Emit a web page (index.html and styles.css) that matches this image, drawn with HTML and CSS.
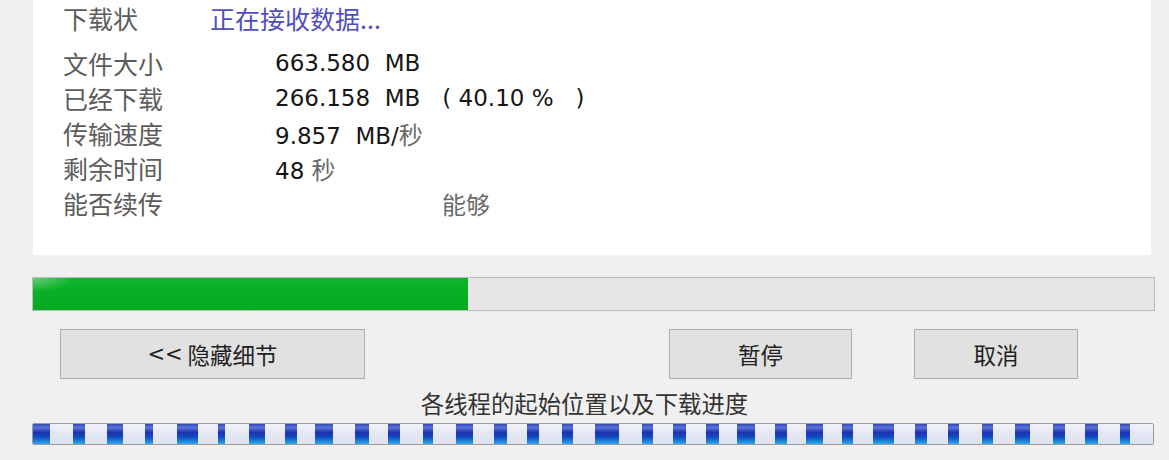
FILE: index.html
```html
<!DOCTYPE html>
<html lang="zh-CN">
<head>
<meta charset="utf-8">
<title>下载进度</title>
<link rel="stylesheet" href="styles.css">
</head>
<body>
<div class="window">
  <section class="panel">
    <div class="status">
      <span class="label">下载状</span>
      <span class="status-value">正在接收数据...</span>
    </div>
    <div class="details">
      <span class="label">文件大小</span>
      <span class="value">663.580  MB</span>
      <span class="label">已经下载</span>
      <span class="value">266.158  MB   ( 40.10 %   )</span>
      <span class="label">传输速度</span>
      <span class="value">9.857  MB/<span class="cjk">秒</span></span>
      <span class="label">剩余时间</span>
      <span class="value">48 <span class="cjk">秒</span></span>
      <span class="label">能否续传</span>
      <span class="value resume"><span class="cjk">能够</span></span>
    </div>
  </section>

  <div class="progress"><div class="fill" style="width:435px"></div></div>

  <div class="buttons">
    <button class="btn btn-details"><span class="arrows">&lt;&lt;</span> 隐藏细节</button>
    <button class="btn btn-pause">暂停</button>
    <button class="btn btn-cancel">取消</button>
  </div>

  <div class="caption">各线程的起始位置以及下载进度</div>

  <div class="threads">
    <div class="seg" style="width:40px"><i class="b" style="width:17px"></i><i class="l"></i></div>
    <div class="seg" style="width:34px"><i class="b" style="width:12px"></i><i class="l"></i></div>
    <div class="seg" style="width:38px"><i class="b" style="width:16px"></i><i class="l"></i></div>
    <div class="seg" style="width:32px"><i class="b" style="width:8px"></i><i class="l"></i></div>
    <div class="seg" style="width:41px"><i class="b" style="width:21px"></i><i class="l"></i></div>
    <div class="seg" style="width:31px"><i class="b" style="width:7px"></i><i class="l"></i></div>
    <div class="seg" style="width:36px"><i class="b" style="width:16px"></i><i class="l"></i></div>
    <div class="seg" style="width:30px"><i class="b" style="width:12px"></i><i class="l"></i></div>
    <div class="seg" style="width:40px"><i class="b" style="width:18px"></i><i class="l"></i></div>
    <div class="seg" style="width:33px"><i class="b" style="width:14px"></i><i class="l"></i></div>
    <div class="seg" style="width:35px"><i class="b" style="width:12px"></i><i class="l"></i></div>
    <div class="seg" style="width:33px"><i class="b" style="width:10px"></i><i class="l"></i></div>
    <div class="seg" style="width:38px"><i class="b" style="width:17px"></i><i class="l"></i></div>
    <div class="seg" style="width:33px"><i class="b" style="width:13px"></i><i class="l"></i></div>
    <div class="seg" style="width:35px"><i class="b" style="width:12px"></i><i class="l"></i></div>
    <div class="seg" style="width:33px"><i class="b" style="width:11px"></i><i class="l"></i></div>
    <div class="seg" style="width:47px"><i class="b" style="width:24px"></i><i class="l"></i></div>
    <div class="seg" style="width:31px"><i class="b" style="width:11px"></i><i class="l"></i></div>
    <div class="seg" style="width:33px"><i class="b" style="width:13px"></i><i class="l"></i></div>
    <div class="seg" style="width:31px"><i class="b" style="width:13px"></i><i class="l"></i></div>
    <div class="seg" style="width:38px"><i class="b" style="width:18px"></i><i class="l"></i></div>
    <div class="seg" style="width:31px"><i class="b" style="width:12px"></i><i class="l"></i></div>
    <div class="seg" style="width:36px"><i class="b" style="width:17px"></i><i class="l"></i></div>
    <div class="seg" style="width:31px"><i class="b" style="width:11px"></i><i class="l"></i></div>
    <div class="seg" style="width:42px"><i class="b" style="width:21px"></i><i class="l"></i></div>
    <div class="seg" style="width:33px"><i class="b" style="width:12px"></i><i class="l"></i></div>
    <div class="seg" style="width:34px"><i class="b" style="width:11px"></i><i class="l"></i></div>
    <div class="seg" style="width:33px"><i class="b" style="width:11px"></i><i class="l"></i></div>
    <div class="seg" style="width:38px"><i class="b" style="width:15px"></i><i class="l"></i></div>
    <div class="seg" style="width:32px"><i class="b" style="width:12px"></i><i class="l"></i></div>
    <div class="seg" style="width:35px"><i class="b" style="width:13px"></i><i class="l"></i></div>
    <div class="seg" style="width:33px"><i class="b" style="width:10px"></i><i class="l"></i></div>
  </div>
</div>
</body>
</html>
```

FILE: styles.css
```css
* {
  box-sizing: border-box;
}

html, body {
  margin: 0;
  padding: 0;
}

body {
  background: #f0f0f0;
  font-family: "Noto Sans CJK SC", "Noto Sans", sans-serif;
  color: #222;
}

.window {
  width: 1169px;
  height: 460px;
  overflow: hidden;
}

/* white details panel */
.panel {
  margin-left: 33px;
  width: 1118px;
  height: 255px;
  background: #ffffff;
  padding: 1px 0 0 30px;
}

.label {
  font-family: "Noto Sans CJK SC", sans-serif;
  font-size: 25px;
  color: #5c5c5c;
  font-weight: 400;
}

.status {
  display: flex;
  height: 35px;
  line-height: 35px;
}

.status .label {
  width: 147px;
  flex: none;
}

.status-value {
  font-family: "Noto Sans CJK SC", sans-serif;
  font-size: 25px;
  color: #5050bc;
}

.details {
  margin-top: 10px;
  display: grid;
  grid-template-columns: 212px auto;
  grid-auto-rows: 35px;
  line-height: 35px;
  justify-content: start;
}

.value {
  font-family: "DejaVu Sans", "Liberation Sans", sans-serif;
  font-size: 23px;
  color: #161616;
  white-space: pre;
}

.value .cjk {
  font-family: "Noto Sans CJK SC", sans-serif;
  font-size: 24px;
  color: #6a6a6a;
}

.value.resume {
  padding-left: 167px;
}

/* overall progress bar */
.progress {
  margin: 22px 0 0 32px;
  width: 1123px;
  height: 34px;
  border: 1px solid #bcbcbc;
  background: #e6e6e6;
}

.fill {
  height: 100%;
  background:
    radial-gradient(ellipse 40px 14px at 0 0, rgba(255,255,255,0.35), rgba(255,255,255,0)),
    linear-gradient(180deg, #10b52e, #06b025 40%, #05aa23);
}

/* buttons */
.buttons {
  display: flex;
  margin-top: 18px;
  padding-left: 60px;
}

.btn {
  height: 50px;
  padding: 0;
  border: 1px solid #adadad;
  background: #e1e1e1;
  font-family: "Noto Sans CJK SC", sans-serif;
  font-size: 22.5px;
  color: #222;
  display: flex;
  align-items: center;
  justify-content: center;
  line-height: 1;
  white-space: pre;
}

.btn .arrows {
  font-family: "DejaVu Sans", sans-serif;
  font-size: 21px;
}

.btn-details {
  width: 305px;
}

.btn-pause {
  width: 183px;
  margin-left: 304px;
}

.btn-cancel {
  width: 164px;
  margin-left: 62px;
}

.caption {
  margin-top: 10px;
  text-align: center;
  font-size: 23.4px;
  line-height: 28px;
  color: #333;
}

/* per-thread progress strip */
.threads {
  margin: 6px 0 0 32px;
  width: 1122px;
  height: 22px;
  border: 1px solid #9c9c9c;
  border-radius: 2px;
  display: flex;
  background: #e6e9f5;
  overflow: hidden;
}

.seg {
  display: flex;
  flex: none;
  height: 100%;
}

.seg .b {
  flex: none;
  height: 100%;
  background: linear-gradient(180deg,
    #3446b4 0%,
    #5b74da 18%,
    #1d33ad 42%,
    #1448c2 65%,
    #1e8ade 88%,
    #35a8ea 100%);
}

.seg .l {
  flex: 1;
  height: 100%;
  background: linear-gradient(180deg, #f1f2fa 0%, #e3e6f3 55%, #dde1f0 100%);
}
```
